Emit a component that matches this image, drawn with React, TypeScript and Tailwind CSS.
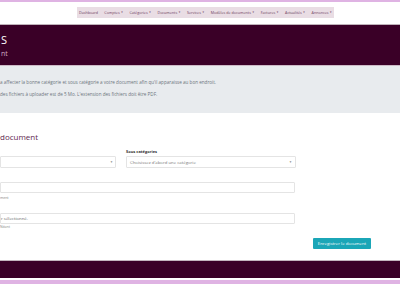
export default function App() {
  const menu = [
    { label: 'Dashboard', caret: false },
    { label: 'Comptes', caret: true },
    { label: 'Catégories', caret: true },
    { label: 'Documents', caret: true },
    { label: 'Services', caret: true },
    { label: 'Modèles de documents', caret: true },
    { label: 'Factures', caret: true },
    { label: 'Actualités', caret: true },
    { label: 'Annonces', caret: true },
  ]

  return (
    <div
      className="w-[400px] h-[284px] overflow-hidden bg-white flex flex-col"
      style={{ fontFamily: '"Open Sans", "Liberation Sans", sans-serif' }}
    >
      {/* Top border */}
      <div className="h-[2px] bg-[#dfb3e3]" />

      {/* Navigation */}
      <div className="h-[22px] pt-[5px] pl-[77px]">
        <nav className="w-[257px] h-[11px] bg-[#e9dde4] flex items-center justify-between px-[2px] text-[3.7px] text-[#6b3b5c] whitespace-nowrap">
          {menu.map((item) => (
            <span key={item.label} className="flex items-center gap-[1px]">
              {item.label}
              {item.caret && <span className="text-[2.5px]">▼</span>}
            </span>
          ))}
        </nav>
      </div>

      {/* Header */}
      <div className="h-[1px] bg-[#bfb2ba]" />
      <header className="h-[40px] bg-[#3a0027] flex flex-col pl-[1px] pt-[9px]">
        <span className="text-[11px] leading-[11px] text-white">S</span>
        <span className="mt-[5px] text-[7px] leading-[7px] text-[#cfa9c3]">nt</span>
      </header>
      <div className="h-[1px] bg-[#cdbac6]" />

      {/* Info box */}
      <div className="h-[47px] bg-[#e8ebee] flex flex-col gap-[6px] pt-[13px] text-[4.6px] leading-[6px] text-[#6c757d] whitespace-nowrap">
        <p>a affecter la bonne catégorie et sous catégorie a votre document afin qu'il apparaisse au bon endroit.</p>
        <p>des fichiers à uploader est de 5 Mo. L'extension des fichiers doit être PDF.</p>
      </div>

      {/* Form */}
      <div className="flex-1 flex flex-col pt-[20px]">
        <h2 className="text-[8px] leading-[8px] font-medium text-[#62284f]">document</h2>

        <div className="mt-[8px] flex gap-[10px]">
          <div className="w-[116px] flex flex-col">
            <div className="h-[7px]" />
            <div className="h-[12px] border border-[#e4e4e4] rounded-[1px] flex items-center justify-end pr-[2px]">
              <span className="text-[3px] text-[#888]">▼</span>
            </div>
          </div>
          <div className="w-[170px] flex flex-col">
            <span className="h-[7px] text-[4px] leading-[5px] font-bold text-[#333]">Sous catégories</span>
            <div className="h-[12px] border border-[#e4e4e4] rounded-[1px] flex items-center justify-between px-[3px]">
              <span className="text-[4.3px] text-[#777]">Choisissez d'abord une catégorie</span>
              <span className="text-[3px] text-[#888]">▼</span>
            </div>
          </div>
        </div>

        <div className="mt-[14px] w-[295px] h-[11px] border border-[#e4e4e4] rounded-[1px]" />
        <span className="mt-[3px] text-[3.5px] leading-[4px] text-[#888]">ment</span>

        <div className="mt-[13px] w-[295px] h-[11px] border border-[#e4e4e4] rounded-[1px] flex items-center">
          <span className="text-[4.3px] text-[#666]">r sélectionné.</span>
        </div>
        <span className="mt-[1px] text-[3.5px] leading-[4px] text-[#888]">Néant</span>

        <div className="mt-[9px] pl-[313px]">
          <button className="w-[58px] h-[11px] bg-[#1ba6b7] rounded-[1px] text-[4.3px] text-white flex items-center justify-center whitespace-nowrap">
            Enregistrer le document
          </button>
        </div>
      </div>

      {/* Footer */}
      <div className="h-[1px] bg-[#c3b5be]" />
      <footer className="h-[17px] bg-[#3a0027]" />
      <div className="h-[2px] bg-white" />
      <div className="h-[4px] bg-[#dfb3e3]" />
    </div>
  )
}
